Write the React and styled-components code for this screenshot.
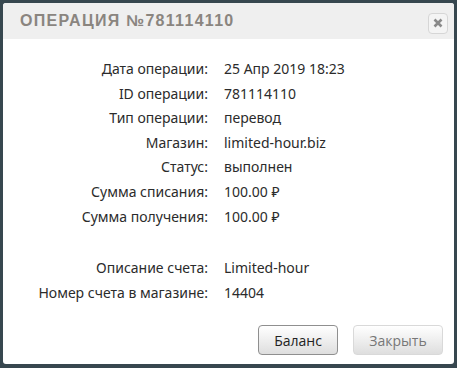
import React from "react";
import styled, { createGlobalStyle } from "styled-components";

const Global = createGlobalStyle`
  html, body {
    margin: 0;
    padding: 0;
    background: #37474f;
    width: 457px;
    height: 368px;
    overflow: hidden;
  }
`;

const Page = styled.div`
  padding: 3px;
  height: 368px;
  box-sizing: border-box;
`;

const Dialog = styled.div`
  width: 451px;
  height: 361px;
  background: #ffffff;
  border-radius: 3px;
  display: flex;
  flex-direction: column;
  overflow: hidden;
`;

const Header = styled.div`
  height: 36px;
  background: #efefef;
  display: flex;
  align-items: center;
  justify-content: space-between;
  padding: 0 6px 0 17px;
`;

const Title = styled.div`
  font-family: "Liberation Sans", Arial, sans-serif;
  font-size: 16px;
  font-weight: bold;
  letter-spacing: 1.3px;
  color: #8a857f;
  text-transform: uppercase;
`;

const CloseBtn = styled.div`
  width: 18px;
  height: 19px;
  border: 1px solid #d6d6d6;
  border-radius: 4px;
  background: #f4f4f4;
  display: flex;
  align-items: center;
  justify-content: center;
  margin-top: 4px;
`;

const Body = styled.div`
  flex: 1;
  padding-top: 18px;
  display: grid;
  grid-template-columns: 205px 1fr;
  column-gap: 16px;
  align-content: start;
  font-family: "Noto Sans", sans-serif;
  font-size: 14px;
  color: #2b2b2b;
`;

const Label = styled.div`
  text-align: right;
  height: 24.6px;
  line-height: 24.6px;
  white-space: nowrap;
`;

const Value = styled.div`
  height: 24.6px;
  line-height: 24.6px;
  white-space: nowrap;
`;

const Spacer = styled.div`
  grid-column: 1 / 3;
  height: 27px;
`;

const Footer = styled.div`
  display: flex;
  justify-content: flex-end;
  gap: 15px;
  padding: 0 11px 9px 0;
`;

const Button = styled.button`
  height: 30px;
  width: ${(p) => p.w}px;
  border-radius: 4px;
  border: 1px solid ${(p) => (p.muted ? "#d9d9d9" : "#8f8f8f")};
  background: linear-gradient(#ffffff, #dedede);
  color: ${(p) => (p.muted ? "#777" : "#222")};
  font-family: "Open Sans", sans-serif;
  font-size: 14px;
  padding: 0;
`;

const rows = [
  ["Дата операции:", "25 Апр 2019 18:23"],
  ["ID операции:", "781114110"],
  ["Тип операции:", "перевод"],
  ["Магазин:", "limited-hour.biz"],
  ["Статус:", "выполнен"],
  ["Сумма списания:", "100.00 ₽"],
  ["Сумма получения:", "100.00 ₽"],
];

const rows2 = [
  ["Описание счета:", "Limited-hour"],
  ["Номер счета в магазине:", "14404"],
];

export default function App() {
  return (
    <Page>
      <Global />
      <Dialog>
        <Header>
          <Title>Операция №781114110</Title>
          <CloseBtn>
            <svg width="10" height="10" viewBox="0 0 10 10">
              <path d="M1.5 1.5L8.5 8.5M8.5 1.5L1.5 8.5" stroke="#8a8a8a" strokeWidth="2.6" />
            </svg>
          </CloseBtn>
        </Header>
        <Body>
          {rows.map(([l, v]) => (
            <React.Fragment key={l}>
              <Label>{l}</Label>
              <Value>{v}</Value>
            </React.Fragment>
          ))}
          <Spacer />
          {rows2.map(([l, v]) => (
            <React.Fragment key={l}>
              <Label>{l}</Label>
              <Value>{v}</Value>
            </React.Fragment>
          ))}
        </Body>
        <Footer>
          <Button w={80}>Баланс</Button>
          <Button w={90} muted>Закрыть</Button>
        </Footer>
      </Dialog>
    </Page>
  );
}
